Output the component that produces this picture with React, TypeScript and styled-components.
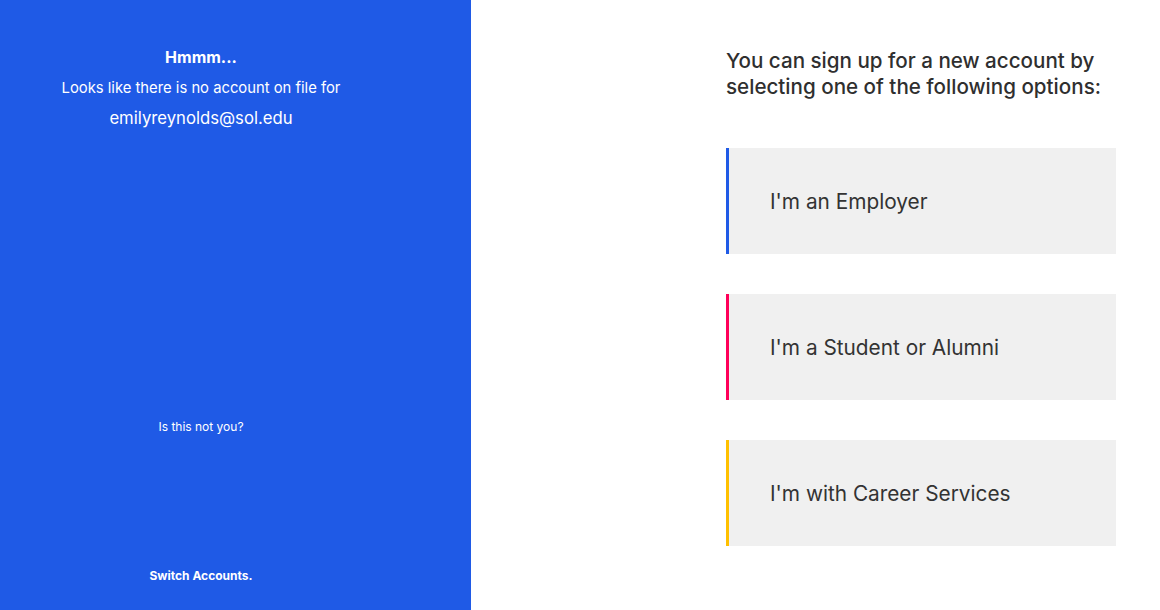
import React from "react";
import styled, { createGlobalStyle } from "styled-components";

const GlobalStyle = createGlobalStyle`
  html, body {
    margin: 0;
    padding: 0;
    background: #ffffff;
    font-family: "Inter", "Noto Sans", sans-serif;
  }
`;

const Page = styled.div`
  display: flex;
  width: 1160px;
  height: 610px;
  overflow: hidden;
`;

const SidePanel = styled.aside`
  width: 471px;
  flex-shrink: 0;
  background-color: #1f5ae6;
  color: #ffffff;
  display: flex;
  flex-direction: column;
  align-items: center;
  padding: 46px 69px 0 0;
  box-sizing: border-box;
`;

const Title = styled.h1`
  margin: 0;
  font-size: 16px;
  font-weight: 700;
  line-height: 22px;
`;

const Message = styled.p`
  margin: 10px 0 0;
  font-size: 14.8px;
  line-height: 20px;
`;

const Email = styled.p`
  margin: 9px 0 0;
  font-size: 16.7px;
  line-height: 22px;
`;

const NotYou = styled.p`
  margin: 290px 0 0;
  font-size: 12px;
  line-height: 16px;
`;

const SwitchLink = styled.a`
  margin-top: 133px;
  font-size: 12px;
  font-weight: 700;
  line-height: 16px;
  color: #ffffff;
  text-decoration: none;
  cursor: pointer;
`;

const Main = styled.main`
  flex: 1;
  padding: 48px 0 0 255px;
  box-sizing: border-box;
`;

const Prompt = styled.h2`
  margin: 0;
  width: 400px;
  font-size: 20.6px;
  font-weight: 500;
  line-height: 26px;
  color: #2f2f2f;
`;

const Options = styled.div`
  display: flex;
  flex-direction: column;
  gap: 40px;
  margin-top: 48px;
  width: 390px;
`;

const OptionCard = styled.button<{ $accent: string }>`
  display: flex;
  align-items: center;
  height: 106px;
  padding: 0 0 0 41px;
  border: none;
  border-left: 3px solid ${({ $accent }) => $accent};
  background-color: #f0f0f0;
  font-family: inherit;
  font-size: 20.8px;
  font-weight: 400;
  color: #333333;
  text-align: left;
  cursor: pointer;
`;

const options = [
  { label: "I'm an Employer", accent: "#1f5ae6" },
  { label: "I'm a Student or Alumni", accent: "#ff0059" },
  { label: "I'm with Career Services", accent: "#ffc000" },
];

export default function App() {
  return (
    <>
      <GlobalStyle />
      <Page>
        <SidePanel>
          <Title>Hmmm...</Title>
          <Message>Looks like there is no account on file for</Message>
          <Email>emilyreynolds@sol.edu</Email>
          <NotYou>Is this not you?</NotYou>
          <SwitchLink>Switch Accounts.</SwitchLink>
        </SidePanel>
        <Main>
          <Prompt>
            You can sign up for a new account by selecting one of the following
            options:
          </Prompt>
          <Options>
            {options.map((o) => (
              <OptionCard key={o.label} $accent={o.accent}>
                {o.label}
              </OptionCard>
            ))}
          </Options>
        </Main>
      </Page>
    </>
  );
}
